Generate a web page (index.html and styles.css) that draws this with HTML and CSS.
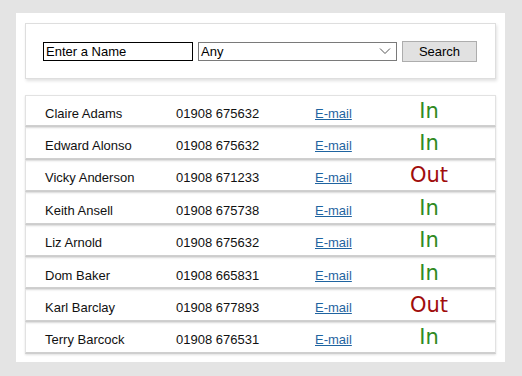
FILE: index.html
```html
<!DOCTYPE html>
<html>
<head>
<meta charset="utf-8">
<link rel="stylesheet" href="styles.css">
</head>
<body>
<div class="panel">
  <div class="search-card">
    <input class="name-input" type="text" value="Enter a Name">
    <div class="select">
      <span>Any</span>
      <svg class="chev" width="12" height="8" viewBox="0 0 12 8"><path d="M1 1.5 L6 6.5 L11 1.5" fill="none" stroke="#555" stroke-width="1"/></svg>
    </div>
    <button class="btn">Search</button>
  </div>
  <div class="list">
    <div class="row"><span class="name">Claire Adams</span><span class="phone">01908 675632</span><span class="mail"><a href="#">E-mail</a></span><span class="status in">In</span></div>
    <div class="row"><span class="name">Edward Alonso</span><span class="phone">01908 675632</span><span class="mail"><a href="#">E-mail</a></span><span class="status in">In</span></div>
    <div class="row"><span class="name">Vicky Anderson</span><span class="phone">01908 671233</span><span class="mail"><a href="#">E-mail</a></span><span class="status out">Out</span></div>
    <div class="row"><span class="name">Keith Ansell</span><span class="phone">01908 675738</span><span class="mail"><a href="#">E-mail</a></span><span class="status in">In</span></div>
    <div class="row"><span class="name">Liz Arnold</span><span class="phone">01908 675632</span><span class="mail"><a href="#">E-mail</a></span><span class="status in">In</span></div>
    <div class="row"><span class="name">Dom Baker</span><span class="phone">01908 665831</span><span class="mail"><a href="#">E-mail</a></span><span class="status in">In</span></div>
    <div class="row"><span class="name">Karl Barclay</span><span class="phone">01908 677893</span><span class="mail"><a href="#">E-mail</a></span><span class="status out">Out</span></div>
    <div class="row"><span class="name">Terry Barcock</span><span class="phone">01908 676531</span><span class="mail"><a href="#">E-mail</a></span><span class="status in">In</span></div>
  </div>
</div>
</body>
</html>
```

FILE: styles.css
```css
html, body {
  margin: 0;
  padding: 0;
}
body {
  background: #e4e4e4;
  font-family: "Liberation Sans", Arial, sans-serif;
  font-size: 13px;
  color: #111;
  padding: 13px 0 0 16px;
  height: 376px;
  box-sizing: border-box;
}
.panel {
  background: #fff;
  width: 489px;
  height: 349px;
  box-sizing: border-box;
  padding: 10px 9px 0 9px;
}
.search-card {
  height: 56px;
  box-sizing: border-box;
  border: 1px solid #dedede;
  box-shadow: 1px 2px 3px rgba(0,0,0,0.12);
  display: flex;
  align-items: center;
  padding: 0 0 0 17px;
  margin-bottom: 16px;
}
.name-input {
  width: 150px;
  height: 19px;
  box-sizing: border-box;
  border: 1px solid #000;
  margin: 0;
  padding: 0 2px;
  font-family: "Liberation Sans", Arial, sans-serif;
  font-size: 13px;
  color: #000;
  outline: none;
  border-radius: 0;
}
.select {
  margin-left: 5px;
  width: 199px;
  height: 19px;
  box-sizing: border-box;
  border: 1px solid #7a7a7a;
  display: flex;
  align-items: center;
  justify-content: space-between;
  padding: 0 5px 0 2px;
  font-size: 13px;
  color: #000;
}
.chev { display: block; }
.btn {
  margin-left: 5px;
  width: 75px;
  height: 21px;
  box-sizing: border-box;
  border: 1px solid #adadad;
  background: #e1e1e1;
  font-family: "Liberation Sans", Arial, sans-serif;
  font-size: 13px;
  color: #000;
  padding: 0;
  border-radius: 0;
}
.list {
  display: flex;
  flex-direction: column;
}
.row {
  height: 32.375px;
  box-sizing: border-box;
  border: 1px solid #e2e2e2;
  border-bottom: 2px solid #cfcfcf;
  box-shadow: 0 1px 2px rgba(0,0,0,0.12);
  display: grid;
  grid-template-columns: 131px 139px 70px 88px;
  align-items: center;
  padding: 5px 0 0 19px;
}
.mail a {
  color: #1f64a0;
  text-decoration: underline;
}
.status {
  text-align: center;
  font-family: "DejaVu Sans", Verdana, sans-serif;
  font-size: 21px;
  line-height: 21px;
  margin-top: -4px;
}
.status.in { color: #2f8a1e; }
.status.out { color: #a00d0d; }
```
